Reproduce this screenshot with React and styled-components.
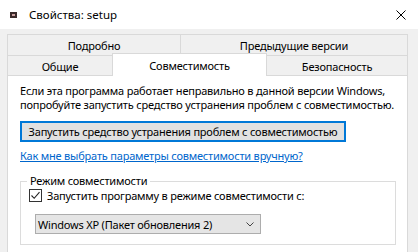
import React from "react";
import styled, { createGlobalStyle } from "styled-components";

const GlobalStyle = createGlobalStyle`
  html, body {
    margin: 0;
    padding: 0;
    background: #f0f0f0;
  }
  body {
    font-family: "Noto Sans", "DejaVu Sans", sans-serif;
    font-size: 11px;
    letter-spacing: -0.2px;
    color: #000;
  }
`;

const Window = styled.div`
  width: 418px;
  height: 252px;
  overflow: hidden;
  background: #f0f0f0;
  display: flex;
  flex-direction: column;
`;

const TitleBar = styled.div`
  height: 29px;
  flex: none;
  background: #fff;
  display: flex;
  align-items: center;
  padding: 0 12px 0 10px;
  box-sizing: border-box;
`;

const TitleText = styled.span`
  flex: 1;
  margin-left: 12px;
  font-size: 11.5px;
  letter-spacing: 0;
`;

const Body = styled.div`
  flex: 1;
  padding: 5px 10px 0 7px;
  display: flex;
  flex-direction: column;
`;

const TabRow = styled.div`
  display: flex;
  align-items: flex-end;
  height: ${(p) => p.$h}px;
`;

const Tab = styled.div`
  box-sizing: border-box;
  width: ${(p) => (p.$w ? `${p.$w}px` : "auto")};
  flex: ${(p) => (p.$w ? "none" : "1")};
  height: ${(p) => (p.$active ? p.$h + 3 : p.$h)}px;
  margin-bottom: ${(p) => (p.$active ? "-1px" : "0")};
  margin-left: ${(p) => (p.$first ? "0" : "-1px")};
  border: 1px solid #d9d9d9;
  border-bottom: none;
  background: ${(p) => (p.$active ? "#fff" : "#f0f0f0")};
  position: relative;
  z-index: ${(p) => (p.$active ? 2 : 1)};
  display: flex;
  align-items: center;
  justify-content: center;
  padding-top: ${(p) => (p.$active ? "0" : "1px")};
  white-space: nowrap;
`;

const Panel = styled.div`
  flex: 1;
  background: #fff;
  border: 1px solid #d9d9d9;
  border-bottom: none;
  padding: 8px 11px 0 12px;
  white-space: nowrap;
`;

const Paragraph = styled.p`
  margin: 0;
  line-height: 14px;
`;

const TroubleButton = styled.button`
  display: block;
  margin-top: 9px;
  width: 326px;
  height: 21px;
  box-sizing: border-box;
  border: 1px solid #0078d7;
  box-shadow: inset 0 0 0 1px #0078d7;
  background: #e1e1e1;
  font: inherit;
  letter-spacing: inherit;
  color: #000;
  padding: 0;
`;

const HelpLink = styled.a`
  display: inline-block;
  margin-top: 7px;
  line-height: 14px;
  color: #0066cc;
  text-decoration: underline;
`;

const Group = styled.fieldset`
  margin: 11px 0 0 0;
  padding: 0 0 10px 6px;
  border: 1px solid #dcdcdc;
  min-width: 0;
`;

const Legend = styled.legend`
  padding: 0 3px;
  line-height: 14px;
`;

const CheckRow = styled.label`
  display: flex;
  align-items: center;
  height: 14px;
  margin-left: 2px;
  gap: 5px;
`;

const CheckBox = styled.span`
  width: 13px;
  height: 13px;
  box-sizing: border-box;
  border: 1px solid #333;
  background: #fff;
  display: flex;
  align-items: center;
  justify-content: center;
`;

const Select = styled.div`
  margin: 12px 0 0 8px;
  width: 226px;
  height: 20px;
  box-sizing: border-box;
  border: 1px solid #adadad;
  background: #e5e5e5;
  display: flex;
  align-items: center;
  padding: 0 6px 0 2px;
  justify-content: space-between;
`;

const tabs1 = [
  { label: "Подробно", w: 174 },
  { label: "Предыдущие версии" },
];

const tabs2 = [
  { label: "Общие", w: 106 },
  { label: "Совместимость", w: 155, active: true },
  { label: "Безопасность" },
];

function AppIcon() {
  return (
    <svg width="7" height="6" viewBox="0 0 7 6">
      <rect x="0" y="0" width="7" height="6" fill="#3a2a2a" />
      <rect x="2" y="2" width="3" height="2" fill="#c9a0a0" />
    </svg>
  );
}

function CloseIcon() {
  return (
    <svg width="10" height="10" viewBox="0 0 10 10">
      <path d="M0.5 0.5 L9.5 9.5 M9.5 0.5 L0.5 9.5" stroke="#000" strokeWidth="1" />
    </svg>
  );
}

function Check() {
  return (
    <svg width="11" height="11" viewBox="0 0 11 11">
      <path d="M1.5 5.5 L4.2 8.3 L9.5 2.2" fill="none" stroke="#222" strokeWidth="1.1" />
    </svg>
  );
}

function Chevron() {
  return (
    <svg width="8" height="5" viewBox="0 0 8 5">
      <path d="M0.5 0.5 L4 4 L7.5 0.5" fill="none" stroke="#444" strokeWidth="1" />
    </svg>
  );
}

export default function App() {
  return (
    <>
      <GlobalStyle />
      <Window>
        <TitleBar>
          <AppIcon />
          <TitleText>Свойства: setup</TitleText>
          <CloseIcon />
        </TitleBar>
        <Body>
          <TabRow $h={21}>
            {tabs1.map((t, i) => (
              <Tab key={t.label} $w={t.w} $h={21} $first={i === 0}>
                {t.label}
              </Tab>
            ))}
          </TabRow>
          <TabRow $h={20}>
            {tabs2.map((t, i) => (
              <Tab key={t.label} $w={t.w} $h={20} $first={i === 0} $active={t.active}>
                {t.label}
              </Tab>
            ))}
          </TabRow>
          <Panel>
            <Paragraph>
              Если эта программа работает неправильно в данной версии Windows,
              <br />
              попробуйте запустить средство устранения проблем с совместимостью.
            </Paragraph>
            <TroubleButton>Запустить средство устранения проблем с совместимостью</TroubleButton>
            <HelpLink href="#">Как мне выбрать параметры совместимости вручную?</HelpLink>
            <Group>
              <Legend>Режим совместимости</Legend>
              <CheckRow>
                <CheckBox>
                  <Check />
                </CheckBox>
                Запустить программу в режиме совместимости с:
              </CheckRow>
              <Select>
                <span>Windows XP (Пакет обновления 2)</span>
                <Chevron />
              </Select>
            </Group>
          </Panel>
        </Body>
      </Window>
    </>
  );
}
